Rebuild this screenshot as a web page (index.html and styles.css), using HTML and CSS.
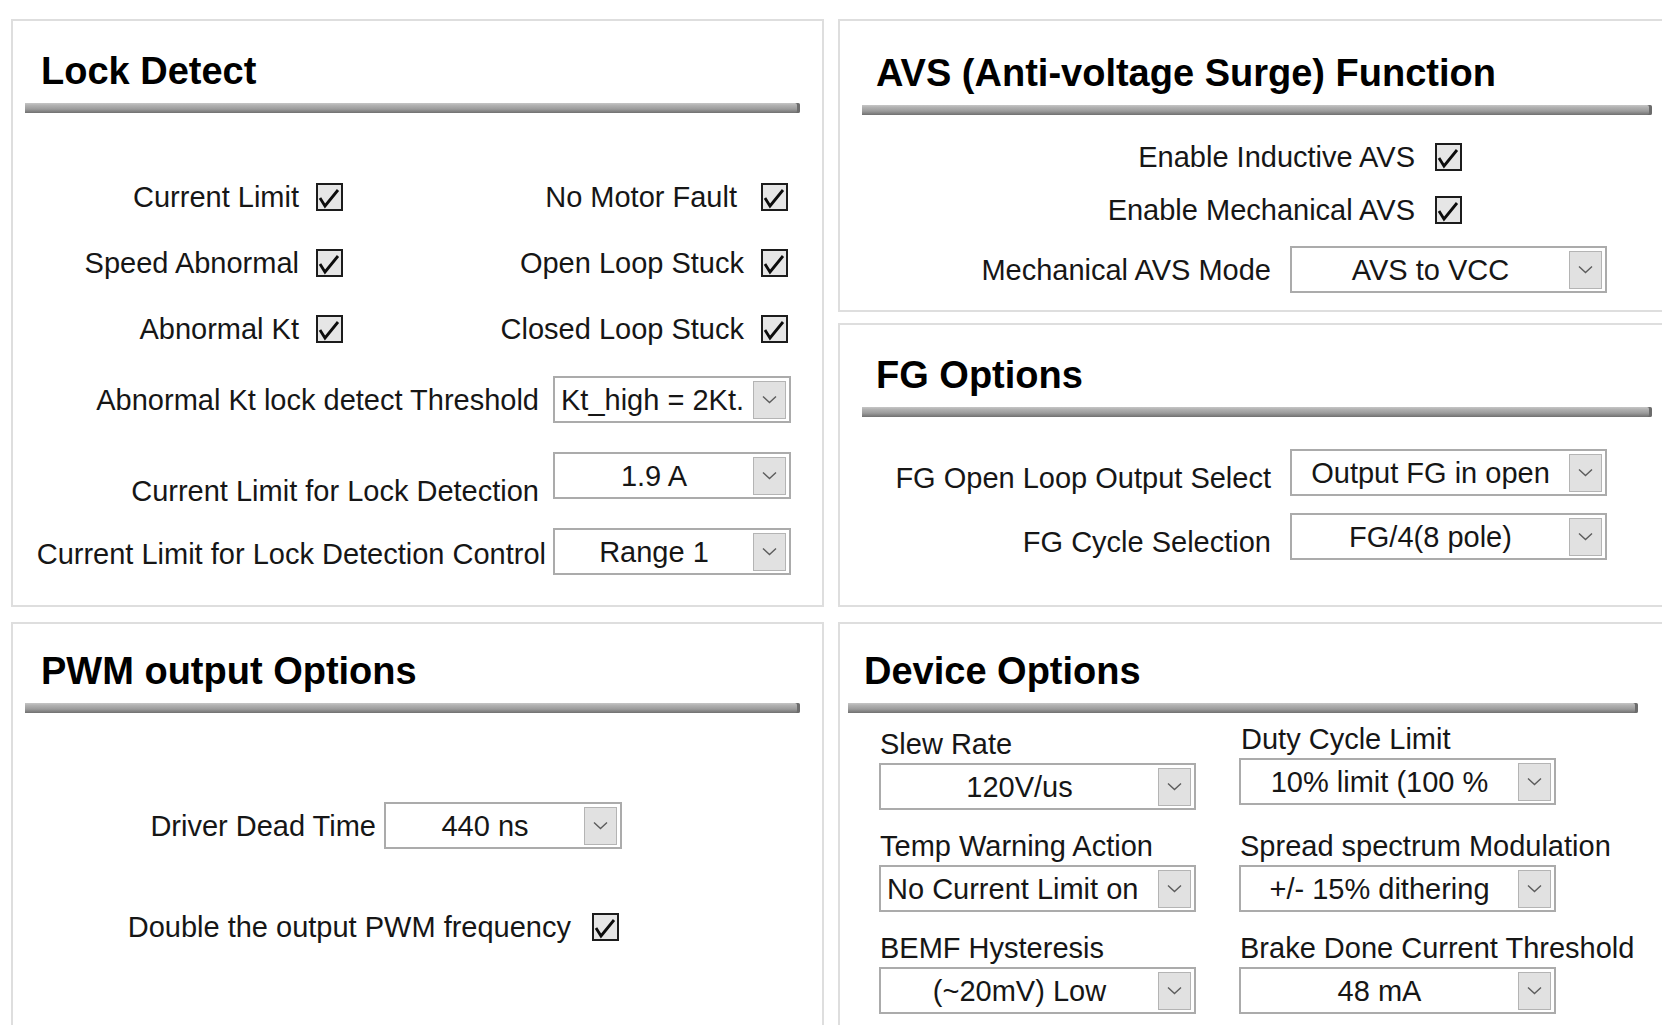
FILE: index.html
```html
<!DOCTYPE html>
<html>
  <head>
    <title>Motor Driver Settings</title>
    <link rel="stylesheet" href="styles.css">
  </head>
  <body>
    <div class="page">

      <div class="col col-left">

        <section class="panel panel-lock">
          <div class="panel-head head-narrow">
            <h2>Lock Detect</h2>
            <div class="rule"></div>
          </div>

          <div class="check-grid">
            <label class="check-item">
              <span>Current Limit</span>
              <span class="box"><svg width="23" height="24" viewBox="0 0 23 24"><path d="M2 13 L7 21 L20 5" /></svg></span>
            </label>
            <label class="check-item check-wide">
              <span>No Motor Fault</span>
              <span class="box"><svg width="23" height="24" viewBox="0 0 23 24"><path d="M2 13 L7 21 L20 5" /></svg></span>
            </label>
            <label class="check-item">
              <span>Speed Abnormal</span>
              <span class="box"><svg width="23" height="24" viewBox="0 0 23 24"><path d="M2 13 L7 21 L20 5" /></svg></span>
            </label>
            <label class="check-item">
              <span>Open Loop Stuck</span>
              <span class="box"><svg width="23" height="24" viewBox="0 0 23 24"><path d="M2 13 L7 21 L20 5" /></svg></span>
            </label>
            <label class="check-item">
              <span>Abnormal Kt</span>
              <span class="box"><svg width="23" height="24" viewBox="0 0 23 24"><path d="M2 13 L7 21 L20 5" /></svg></span>
            </label>
            <label class="check-item">
              <span>Closed Loop Stuck</span>
              <span class="box"><svg width="23" height="24" viewBox="0 0 23 24"><path d="M2 13 L7 21 L20 5" /></svg></span>
            </label>
          </div>

          <div class="select-grid">
            <span class="field-label">Abnormal Kt lock detect Threshold</span>
            <div class="dropdown dd-left">
              <span class="dd-value">Kt_high = 2Kt.</span>
              <span class="dd-arrow"><svg width="15" height="9" viewBox="0 0 15 9"><path d="M1 1.5 L7.5 7.5 L14 1.5" /></svg></span>
            </div>

            <span class="field-label label-low">Current Limit for Lock Detection</span>
            <div class="dropdown">
              <span class="dd-value">1.9 A</span>
              <span class="dd-arrow"><svg width="15" height="9" viewBox="0 0 15 9"><path d="M1 1.5 L7.5 7.5 L14 1.5" /></svg></span>
            </div>

            <span class="field-label label-long">Current Limit for Lock Detection Control</span>
            <div class="dropdown">
              <span class="dd-value">Range 1</span>
              <span class="dd-arrow"><svg width="15" height="9" viewBox="0 0 15 9"><path d="M1 1.5 L7.5 7.5 L14 1.5" /></svg></span>
            </div>
          </div>
        </section>

        <section class="panel panel-pwm">
          <div class="panel-head head-narrow">
            <h2>PWM output Options</h2>
            <div class="rule"></div>
          </div>

          <div class="pwm-body">
            <div class="inline-row">
              <span class="field-label">Driver Dead Time</span>
              <div class="dropdown">
                <span class="dd-value">440 ns</span>
                <span class="dd-arrow"><svg width="15" height="9" viewBox="0 0 15 9"><path d="M1 1.5 L7.5 7.5 L14 1.5" /></svg></span>
              </div>
            </div>
            <label class="check-item pwm-check">
              <span>Double the output PWM frequency</span>
              <span class="box"><svg width="23" height="24" viewBox="0 0 23 24"><path d="M2 13 L7 21 L20 5" /></svg></span>
            </label>
          </div>
        </section>

      </div>

      <div class="col col-right">

        <section class="panel panel-avs">
          <div class="panel-head head-wide">
            <h2>AVS (Anti-voltage Surge) Function</h2>
            <div class="rule"></div>
          </div>

          <div class="avs-body">
            <label class="check-item avs-check">
              <span>Enable Inductive AVS</span>
              <span class="box"><svg width="23" height="24" viewBox="0 0 23 24"><path d="M2 13 L7 21 L20 5" /></svg></span>
            </label>
            <label class="check-item avs-check">
              <span>Enable Mechanical AVS</span>
              <span class="box"><svg width="23" height="24" viewBox="0 0 23 24"><path d="M2 13 L7 21 L20 5" /></svg></span>
            </label>
            <div class="inline-row avs-row">
              <span class="field-label">Mechanical AVS Mode</span>
              <div class="dropdown dd-wide">
                <span class="dd-value">AVS to VCC</span>
                <span class="dd-arrow"><svg width="15" height="9" viewBox="0 0 15 9"><path d="M1 1.5 L7.5 7.5 L14 1.5" /></svg></span>
              </div>
            </div>
          </div>
        </section>

        <section class="panel panel-fg">
          <div class="panel-head head-wide">
            <h2>FG Options</h2>
            <div class="rule"></div>
          </div>

          <div class="fg-grid">
            <span class="field-label">FG Open Loop Output Select</span>
            <div class="dropdown dd-wide">
              <span class="dd-value">Output FG in open</span>
              <span class="dd-arrow"><svg width="15" height="9" viewBox="0 0 15 9"><path d="M1 1.5 L7.5 7.5 L14 1.5" /></svg></span>
            </div>

            <span class="field-label">FG Cycle Selection</span>
            <div class="dropdown dd-wide">
              <span class="dd-value">FG/4(8 pole)</span>
              <span class="dd-arrow"><svg width="15" height="9" viewBox="0 0 15 9"><path d="M1 1.5 L7.5 7.5 L14 1.5" /></svg></span>
            </div>
          </div>
        </section>

        <section class="panel panel-device">
          <div class="panel-head head-device">
            <h2>Device Options</h2>
            <div class="rule"></div>
          </div>

          <div class="device-grid">
            <div class="field">
              <span class="field-title">Slew Rate</span>
              <div class="dropdown dd-wide">
                <span class="dd-value">120V/us</span>
                <span class="dd-arrow"><svg width="15" height="9" viewBox="0 0 15 9"><path d="M1 1.5 L7.5 7.5 L14 1.5" /></svg></span>
              </div>
            </div>
            <div class="field field-raised">
              <span class="field-title">Duty Cycle Limit</span>
              <div class="dropdown dd-wide">
                <span class="dd-value">10% limit (100 %</span>
                <span class="dd-arrow"><svg width="15" height="9" viewBox="0 0 15 9"><path d="M1 1.5 L7.5 7.5 L14 1.5" /></svg></span>
              </div>
            </div>

            <div class="field">
              <span class="field-title">Temp Warning Action</span>
              <div class="dropdown dd-wide dd-left">
                <span class="dd-value">No Current Limit on</span>
                <span class="dd-arrow"><svg width="15" height="9" viewBox="0 0 15 9"><path d="M1 1.5 L7.5 7.5 L14 1.5" /></svg></span>
              </div>
            </div>
            <div class="field">
              <span class="field-title">Spread spectrum Modulation</span>
              <div class="dropdown dd-wide">
                <span class="dd-value">+/- 15% dithering</span>
                <span class="dd-arrow"><svg width="15" height="9" viewBox="0 0 15 9"><path d="M1 1.5 L7.5 7.5 L14 1.5" /></svg></span>
              </div>
            </div>

            <div class="field">
              <span class="field-title">BEMF Hysteresis</span>
              <div class="dropdown dd-wide">
                <span class="dd-value">(~20mV) Low</span>
                <span class="dd-arrow"><svg width="15" height="9" viewBox="0 0 15 9"><path d="M1 1.5 L7.5 7.5 L14 1.5" /></svg></span>
              </div>
            </div>
            <div class="field">
              <span class="field-title">Brake Done Current Threshold</span>
              <div class="dropdown dd-wide">
                <span class="dd-value">48 mA</span>
                <span class="dd-arrow"><svg width="15" height="9" viewBox="0 0 15 9"><path d="M1 1.5 L7.5 7.5 L14 1.5" /></svg></span>
              </div>
            </div>
          </div>
        </section>

      </div>
    </div>
  </body>
</html>
```

FILE: styles.css
```css
body {
  margin: 0;
  background-color: white;
  overflow: hidden;
  font-family: "Liberation Sans", Arial, sans-serif;
  font-size: 29px;
  color: #161616;
}

.page {
  display: flex;
  gap: 14px;
  padding: 19px 0 0 11px;
}

.col {
  display: flex;
  flex-direction: column;
  flex: none;
}

.col-left {
  width: 813px;
}

.col-right {
  width: 840px;
}

.panel {
  box-sizing: border-box;
  border: 2px solid #dedede;
  background-color: white;
}

.panel-lock {
  height: 588px;
}

.panel-pwm {
  height: 420px;
  margin-top: 15px;
}

.panel-avs {
  height: 293px;
}

.panel-fg {
  height: 284px;
  margin-top: 11px;
}

.panel-device {
  height: 420px;
  margin-top: 15px;
}

/* heading + grey bar */
.panel-head {
  padding-top: 28px;
}

.panel-avs .panel-head {
  padding-top: 30px;
}

.panel-pwm .panel-head,
.panel-device .panel-head {
  padding-top: 25px;
}

.panel-head h2 {
  margin: 0;
  font-size: 38px;
  line-height: 44px;
  font-weight: bold;
  color: #000;
  white-space: nowrap;
}

.rule {
  height: 10px;
  margin-top: 10px;
  background: linear-gradient(to bottom, #c6c6c6 0%, #b0b0b0 25%, #9c9c9c 60%, #707070 100%);
  box-shadow: inset -3px 0 0 #6c6c6c;
  border-radius: 0 2px 2px 0;
}

.head-narrow {
  margin-left: 12px;
  width: 775px;
}

.head-narrow h2 {
  padding-left: 16px;
}

.head-wide {
  margin-left: 22px;
  width: 790px;
}

.head-wide h2 {
  padding-left: 14px;
}

.head-device {
  margin-left: 8px;
  width: 790px;
}

.head-device h2 {
  padding-left: 16px;
}

/* checkboxes */
.check-item {
  display: flex;
  justify-content: flex-end;
  align-items: center;
  gap: 17px;
  height: 34px;
  line-height: 34px;
  white-space: nowrap;
}

.check-wide {
  gap: 24px;
}

.box {
  box-sizing: border-box;
  width: 27px;
  height: 28px;
  border: 2px solid #1c1c1c;
  background-color: #e6e6e6;
  display: flex;
  align-items: center;
  justify-content: center;
}

.box svg path {
  fill: none;
  stroke: #0c0c0c;
  stroke-width: 2.8;
}

/* dropdowns */
.dropdown {
  box-sizing: border-box;
  display: flex;
  align-items: center;
  width: 238px;
  height: 47px;
  padding-right: 3px;
  border: 2px solid #ababab;
  background-color: white;
}

.dd-wide {
  width: 317px;
}

.dd-value {
  flex: 1;
  overflow: hidden;
  text-align: center;
  white-space: nowrap;
  line-height: 34px;
}

.dd-left .dd-value {
  text-align: left;
  padding-left: 6px;
}

.dd-arrow {
  box-sizing: border-box;
  flex: none;
  width: 33px;
  height: 38px;
  border: 1px solid #b4b4b4;
  background-color: #e1e1e1;
  display: flex;
  align-items: center;
  justify-content: center;
}

.dd-arrow svg path {
  fill: none;
  stroke: #5c5c5c;
  stroke-width: 1.4;
}

.field-label {
  line-height: 34px;
  white-space: nowrap;
}

/* lock detect */
.check-grid {
  display: grid;
  grid-template-columns: 330px 445px;
  row-gap: 32px;
  margin-top: 67px;
}

.select-grid {
  display: grid;
  grid-template-columns: 526px 238px;
  grid-auto-rows: 47px;
  column-gap: 14px;
  row-gap: 29px;
  margin-top: 30px;
}

.select-grid .field-label {
  justify-self: end;
  align-self: center;
}

.select-grid .label-low {
  align-self: end;
  margin-bottom: -9px;
}

.select-grid .label-long {
  margin-right: -7px;
  margin-top: 4px;
}

/* pwm */
.pwm-body {
  width: 609px;
  margin-top: 89px;
  display: flex;
  flex-direction: column;
  align-items: flex-end;
}

.inline-row {
  display: flex;
  align-items: center;
  gap: 8px;
}

.pwm-check {
  margin-top: 61px;
  margin-right: 3px;
  gap: 21px;
}

/* avs */
.avs-body {
  width: 767px;
  margin-top: 25px;
  display: flex;
  flex-direction: column;
  align-items: flex-end;
  gap: 19px;
}

.avs-check {
  gap: 20px;
  margin-right: 145px;
}

.avs-row {
  gap: 19px;
}

/* fg */
.fg-grid {
  display: grid;
  grid-template-columns: 431px 317px;
  grid-auto-rows: 47px;
  column-gap: 19px;
  row-gap: 17px;
  margin-top: 32px;
}

.fg-grid .field-label {
  justify-self: end;
  align-self: end;
  margin-bottom: 1px;
}

/* device */
.device-grid {
  display: grid;
  grid-template-columns: 317px 316px;
  column-gap: 43px;
  row-gap: 19px;
  margin: 14px 0 0 39px;
}

.field {
  display: flex;
  flex-direction: column;
  gap: 2px;
}

.field-title {
  line-height: 34px;
  padding-left: 1px;
  white-space: nowrap;
}

.field-raised {
  margin-top: -5px;
}

.field-raised .field-title {
  padding-left: 2px;
}
```
